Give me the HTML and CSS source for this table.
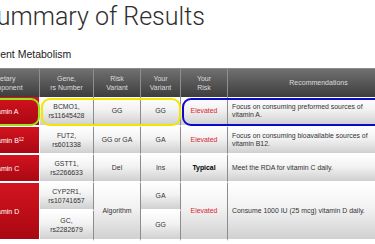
FILE: index.html
```html
<!DOCTYPE html>
<html>
<head>
<meta charset="utf-8">
<link rel="stylesheet" href="styles.css">
</head>
<body>
<div class="slide">
  <h1 class="title">Summary of Results</h1>
  <h2 class="subtitle">Nutrient Metabolism</h2>
  <div class="grid">
    <div class="hd">Dietary<br>Component</div>
    <div class="hd">Gene,<br>rs Number</div>
    <div class="hd">Risk<br>Variant</div>
    <div class="hd">Your<br>Variant</div>
    <div class="hd">Your<br>Risk</div>
    <div class="hd">Recommendations</div>

    <div class="nut">Vitamin A</div>
    <div class="cell">BCMO1,<br>rs11645428</div>
    <div class="cell">GG</div>
    <div class="cell">GG</div>
    <div class="cell risk">Elevated</div>
    <div class="cell rec">Focus on consuming preformed sources of<br>vitamin A.</div>

    <div class="nut">Vitamin B<sub>12</sub></div>
    <div class="cell">FUT2,<br>rs601338</div>
    <div class="cell">GG or GA</div>
    <div class="cell">GA</div>
    <div class="cell risk">Elevated</div>
    <div class="cell rec">Focus on consuming bioavailable sources of<br>vitamin B12.</div>

    <div class="nut">Vitamin C</div>
    <div class="cell">GSTT1,<br>rs2266633</div>
    <div class="cell">Del</div>
    <div class="cell">Ins</div>
    <div class="cell typical">Typical</div>
    <div class="cell rec">Meet the RDA for vitamin C daily.</div>

    <div class="nut span2">Vitamin D</div>
    <div class="cell">CYP2R1,<br>rs10741657</div>
    <div class="cell span2">Algorithm</div>
    <div class="cell">GA</div>
    <div class="cell risk span2">Elevated</div>
    <div class="cell rec span2">Consume 1000 IU (25 mcg) vitamin D daily.</div>
    <div class="cell">GC,<br>rs2282679</div>
    <div class="cell">GG</div>

    <div class="ring ring-green"></div>
    <div class="ring ring-yellow"></div>
    <div class="ring ring-blue"></div>
  </div>
</div>
</body>
</html>
```

FILE: styles.css
```css
html, body {
  margin: 0;
  padding: 0;
  background: #fff;
}
body {
  width: 375px;
  height: 244px;
  overflow: hidden;
  font-family: "Liberation Sans", Arial, sans-serif;
}
.slide {
  margin-left: -30px;
}
.title {
  margin: 0 0 0 12px;
  padding-top: 2px;
  font: 300 25px/30px Roboto, sans-serif;
  color: #2e2e2e;
}
.subtitle {
  margin: 16px 0 0 8px;
  font: 400 10.5px/12px "Liberation Sans", Arial, sans-serif;
  color: #222;
}
.grid {
  position: relative;
  margin-top: 8px;
  display: grid;
  grid-template-columns: 70px 54px 47px 40px 47px 182px;
  grid-template-rows: 28px 30px 28px 28px 28px 30px;
  border-top: 1px solid #8a8a8a;
  width: max-content;
}
.grid > div {
  box-sizing: border-box;
}
.hd {
  display: flex;
  align-items: center;
  justify-content: center;
  text-align: center;
  background: linear-gradient(#707070, #3d3d3d);
  border-right: 1px solid #8e8e8e;
  color: #dcdcdc;
  font-size: 7px;
  line-height: 9.5px;
}
.nut {
  display: flex;
  align-items: center;
  padding-left: 19px;
  background: linear-gradient(#d3131f, #a90812);
  border-right: 1px solid #fff;
  border-bottom: 2px solid #fff;
  color: #fff;
  font-size: 7px;
}
.nut sub {
  font-size: 4.5px;
  vertical-align: -1px;
  line-height: 0;
}
.cell {
  display: flex;
  align-items: center;
  justify-content: center;
  text-align: center;
  background: linear-gradient(#ffffff 0%, #f2f2f2 45%, #d0d0d0 100%);
  border-right: 1px solid #8c8c8c;
  border-bottom: 2px solid #fff;
  color: #333;
  font-size: 6.9px;
  line-height: 9.5px;
}
.span2 {
  grid-row: span 2;
}
.risk {
  color: #d8262f;
}
.typical {
  color: #000;
  font-weight: bold;
}
.rec {
  justify-content: flex-start;
  text-align: left;
  padding-left: 4px;
  line-height: 8.5px;
}
.ring {
  position: absolute;
  top: 29px;
  height: 28px;
  box-sizing: border-box;
  border: 2px solid;
  border-radius: 9px;
}
.ring-green {
  left: 0;
  width: 70px;
  border-color: #9de31a;
}
.ring-yellow {
  left: 71px;
  width: 140px;
  border-color: #f2e600;
}
.ring-blue {
  left: 212px;
  width: 232px;
  border-color: #0a0acc;
}
```
